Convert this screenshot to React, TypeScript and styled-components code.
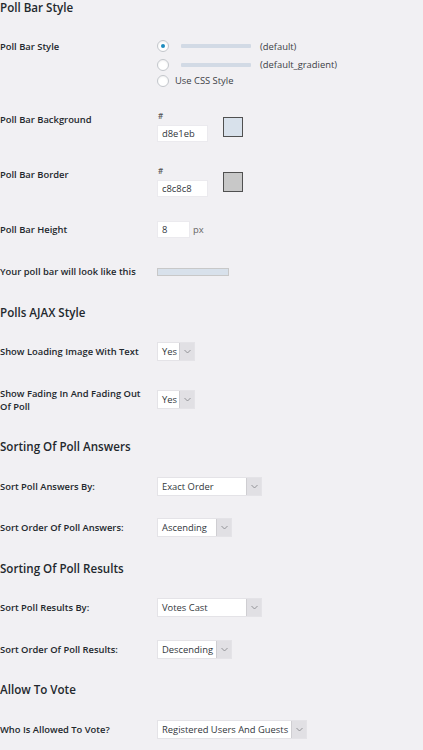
import React from "react";
import styled, { createGlobalStyle } from "styled-components";

const GlobalStyle = createGlobalStyle`
  html, body {
    margin: 0;
    padding: 0;
    background: #f1f0f3;
  }
  body {
    font-family: "Open Sans", "Noto Sans", sans-serif;
    color: #23282d;
  }
`;

const Page = styled.div`
  width: 423px;
  overflow: hidden;
`;

const SectionTitle = styled.h2<{ $first?: boolean }>`
  margin: ${(p) => (p.$first ? "0" : "12px")} 0 10px;
  font-size: 11.6px;
  line-height: 16px;
  font-weight: 600;
  color: #23282d;
`;

const Row = styled.div`
  display: grid;
  grid-template-columns: 157px 1fr;
`;

const Label = styled.div`
  align-self: start;
  padding: 14.4px 8px 14.4px 0;
  font-size: 9.4px;
  line-height: 13px;
  font-weight: 600;
  color: #23282d;
`;

const Cell = styled.div<{ $pt?: number; $pb?: number }>`
  align-self: center;
  padding: ${(p) => p.$pt ?? 10}px 0 ${(p) => p.$pb ?? 10}px;
  font-size: 9.4px;
  color: #444;
`;

const RadioGroup = styled.div`
  display: flex;
  flex-direction: column;
`;

const RadioLine = styled.label<{ $h: number }>`
  display: flex;
  align-items: center;
  height: ${(p) => p.$h}px;
  font-size: 9.4px;
  color: #3c4046;
`;

const RadioDot = styled.span<{ $on?: boolean }>`
  box-sizing: border-box;
  width: 12px;
  height: 12px;
  border-radius: 50%;
  border: 1px solid #c3c6cb;
  background: #fff;
  display: flex;
  align-items: center;
  justify-content: center;
  flex: none;
  box-shadow: inset 0 1px 2px rgba(0, 0, 0, 0.06);
  &::after {
    content: "";
    display: ${(p) => (p.$on ? "block" : "none")};
    width: 4px;
    height: 4px;
    border-radius: 50%;
    background: #1e8cbe;
  }
`;

const SampleBar = styled.span`
  width: 70px;
  height: 4px;
  margin: 0 9px 0 12px;
  background: #d2dae5;
  border-radius: 1px;
  flex: none;
`;

const RadioText = styled.span<{ $gap?: number }>`
  margin-left: ${(p) => p.$gap ?? 0}px;
`;

const ColorField = styled.div`
  display: flex;
  align-items: center;
`;

const HexColumn = styled.div`
  display: flex;
  flex-direction: column;
`;

const Hash = styled.span`
  font-size: 8px;
  line-height: 10px;
  font-weight: 600;
  color: #555;
  padding-left: 1px;
  margin-bottom: 4px;
`;

const TextBox = styled.div<{ $w: number }>`
  box-sizing: border-box;
  width: ${(p) => p.$w}px;
  height: 17px;
  padding: 0 4px;
  background: #fff;
  border: 1px solid #ebeaee;
  font-size: 9.4px;
  line-height: 15px;
  color: #32373c;
`;

const Swatch = styled.span<{ $c: string }>`
  box-sizing: border-box;
  width: 20px;
  height: 20px;
  margin-left: 15px;
  border: 1px solid #505050;
  background: ${(p) => p.$c};
  flex: none;
`;

const Inline = styled.div`
  display: flex;
  align-items: center;
`;

const Unit = styled.span`
  margin-left: 3px;
  font-size: 9.4px;
  color: #666;
`;

const PreviewBar = styled.div`
  box-sizing: border-box;
  width: 72px;
  height: 8px;
  background: #d8e1eb;
  border: 1px solid #c8c8c8;
`;

const SelectBox = styled.div<{ $w: number }>`
  box-sizing: border-box;
  display: flex;
  width: ${(p) => p.$w}px;
  height: 19px;
  background: #fff;
  border: 1px solid #e4e3e7;
`;

const SelectValue = styled.span`
  flex: 1;
  padding-left: 4px;
  font-size: 9.4px;
  line-height: 17px;
  color: #32373c;
  white-space: nowrap;
  overflow: hidden;
`;

const SelectArrow = styled.span`
  width: 14px;
  flex: none;
  display: flex;
  align-items: center;
  justify-content: center;
  background: #e1e0e4;
  border-left: 1px solid #cfced2;
`;

function Chevron() {
  return (
    <svg width="7" height="5" viewBox="0 0 7 5">
      <polyline points="0.5,1 3.5,4 6.5,1" fill="none" stroke="#8a8a8e" strokeWidth="0.9" />
    </svg>
  );
}

function Select({ value, width }: { value: string; width: number }) {
  return (
    <SelectBox $w={width}>
      <SelectValue>{value}</SelectValue>
      <SelectArrow>
        <Chevron />
      </SelectArrow>
    </SelectBox>
  );
}

function ColorInput({ value }: { value: string }) {
  return (
    <ColorField>
      <HexColumn>
        <Hash>#</Hash>
        <TextBox $w={51}>{value}</TextBox>
      </HexColumn>
      <Swatch $c={`#${value}`} />
    </ColorField>
  );
}

function SelectRow({ label, value, width }: { label: React.ReactNode; value: string; width: number }) {
  return (
    <Row>
      <Label>{label}</Label>
      <Cell>
        <Select value={value} width={width} />
      </Cell>
    </Row>
  );
}

export default function App() {
  return (
    <Page>
      <GlobalStyle />

      <SectionTitle $first>Poll Bar Style</SectionTitle>
      <Row>
        <Label>Poll Bar Style</Label>
        <Cell $pt={11} $pb={12}>
          <RadioGroup>
            <RadioLine $h={18}>
              <RadioDot $on />
              <SampleBar />
              <span>(default)</span>
            </RadioLine>
            <RadioLine $h={19}>
              <RadioDot />
              <SampleBar />
              <span>(default_gradient)</span>
            </RadioLine>
            <RadioLine $h={13}>
              <RadioDot />
              <RadioText $gap={6}>Use CSS Style</RadioText>
            </RadioLine>
          </RadioGroup>
        </Cell>
      </Row>
      <Row>
        <Label>Poll Bar Background</Label>
        <Cell $pt={12} $pb={12}>
          <ColorInput value="d8e1eb" />
        </Cell>
      </Row>
      <Row>
        <Label>Poll Bar Border</Label>
        <Cell $pt={12} $pb={12}>
          <ColorInput value="c8c8c8" />
        </Cell>
      </Row>
      <Row>
        <Label>Poll Bar Height</Label>
        <Cell>
          <Inline>
            <TextBox $w={33}>8</TextBox>
            <Unit>px</Unit>
          </Inline>
        </Cell>
      </Row>
      <Row>
        <Label>Your poll bar will look like this</Label>
        <Cell>
          <PreviewBar />
        </Cell>
      </Row>

      <SectionTitle>Polls AJAX Style</SectionTitle>
      <SelectRow label="Show Loading Image With Text" value="Yes" width={38} />
      <SelectRow label="Show Fading In And Fading Out Of Poll" value="Yes" width={38} />

      <SectionTitle>Sorting Of Poll Answers</SectionTitle>
      <SelectRow label="Sort Poll Answers By:" value="Exact Order" width={105} />
      <SelectRow label="Sort Order Of Poll Answers:" value="Ascending" width={75} />

      <SectionTitle>Sorting Of Poll Results</SectionTitle>
      <SelectRow label="Sort Poll Results By:" value="Votes Cast" width={105} />
      <SelectRow label="Sort Order Of Poll Results:" value="Descending" width={75} />

      <SectionTitle>Allow To Vote</SectionTitle>
      <SelectRow label="Who Is Allowed To Vote?" value="Registered Users And Guests" width={150} />
    </Page>
  );
}
